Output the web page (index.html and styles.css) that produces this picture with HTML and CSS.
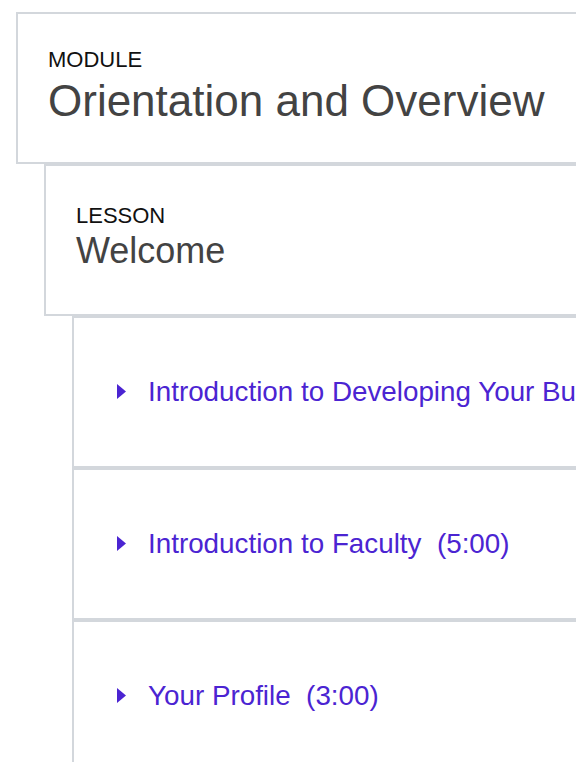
FILE: index.html
```html
<!DOCTYPE html>
<html lang="en">
<head>
<meta charset="utf-8">
<title>Orientation and Overview</title>
<link rel="stylesheet" href="styles.css">
</head>
<body>
<main class="outline">
  <section class="module">
    <header class="box module-head">
      <div class="label">MODULE</div>
      <h1 class="module-title">Orientation and Overview</h1>
    </header>
    <section class="lesson">
      <header class="box lesson-head">
        <div class="label">LESSON</div>
        <h2 class="lesson-title">Welcome</h2>
      </header>
      <ul class="items">
        <li class="box item">
          <svg class="caret" width="9" height="15" viewBox="0 0 9 15"><polygon points="0,0 9,7.5 0,15"/></svg>
          <a class="item-link" href="#">Introduction to Developing Your Business Plan&nbsp;&nbsp;(12:00)</a>
        </li>
        <li class="box item">
          <svg class="caret" width="9" height="15" viewBox="0 0 9 15"><polygon points="0,0 9,7.5 0,15"/></svg>
          <a class="item-link" href="#">Introduction to Faculty&nbsp;&nbsp;(5:00)</a>
        </li>
        <li class="box item">
          <svg class="caret" width="9" height="15" viewBox="0 0 9 15"><polygon points="0,0 9,7.5 0,15"/></svg>
          <a class="item-link" href="#">Your Profile&nbsp;&nbsp;(3:00)</a>
        </li>
      </ul>
    </section>
  </section>
</main>
</body>
</html>
```
FILE: styles.css
```css
html, body {
  margin: 0;
  padding: 0;
  overflow: hidden;
  background: #ffffff;
}

body {
  font-family: "Liberation Sans", Arial, Helvetica, sans-serif;
  color: #111111;
}

.outline {
  padding: 12px 0 0 16px;
  width: 1200px;
}

.box {
  border: 2px solid #d3d7dc;
  background: #ffffff;
  box-sizing: border-box;
}

.label {
  font-size: 22px;
  line-height: 26px;
  color: #111111;
}

.module-head {
  height: 152px;
  padding: 33px 0 0 30px;
}

.module-title {
  margin: -2px 0 0;
  font-weight: normal;
  font-size: 44px;
  line-height: 60px;
  color: #434343;
}

.lesson {
  margin-left: 28px;
}

.lesson-head {
  height: 152px;
  padding: 37px 0 0 30px;
}

.lesson-title {
  margin: 2px 0 0;
  font-weight: normal;
  font-size: 36px;
  line-height: 40px;
  color: #434343;
}

.items {
  list-style: none;
  margin: 0 0 0 28px;
  padding: 0;
}

.item {
  height: 152px;
  display: flex;
  align-items: flex-end;
  padding: 0 0 66px 43px;
}

.caret {
  fill: #4b24d2;
  flex: none;
  margin: 0 22px 1px 0;
}

.item-link {
  font-size: 27.8px;
  line-height: 32px;
  color: #4b24d2;
  text-decoration: none;
  white-space: nowrap;
  position: relative;
  top: 8px;
}
```
